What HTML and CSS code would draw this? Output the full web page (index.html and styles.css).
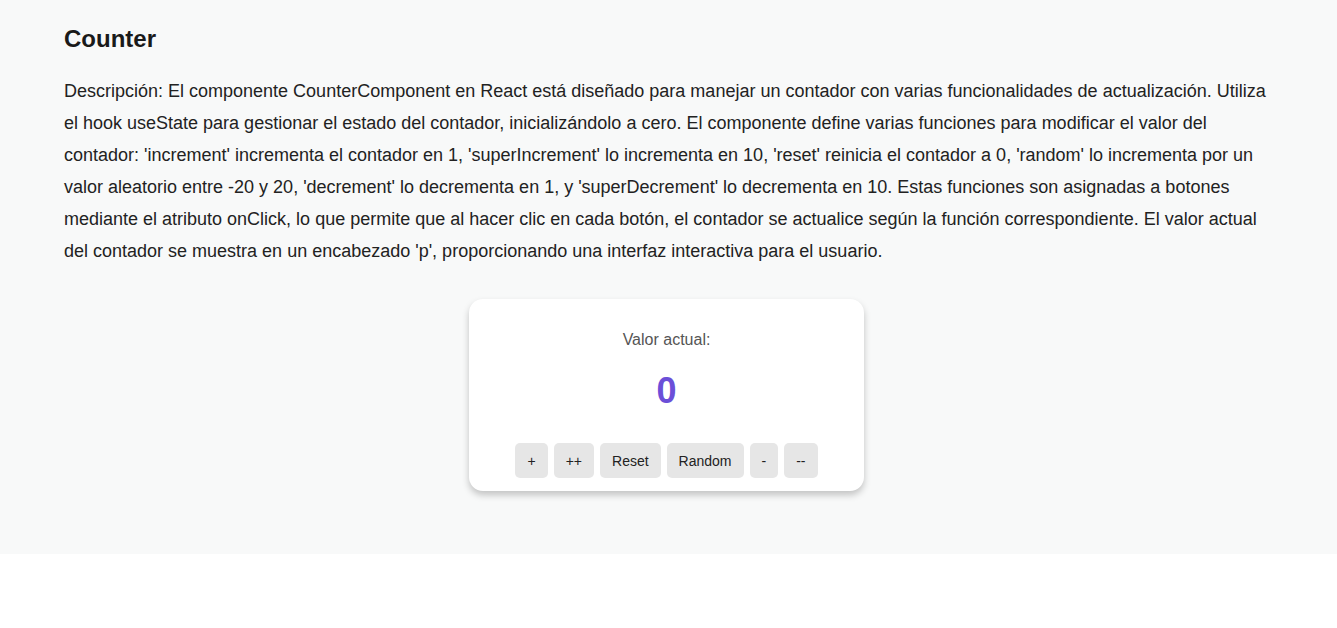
FILE: index.html
```html
<!DOCTYPE html>
<html lang="es">
<head>
<meta charset="utf-8">
<title>Counter</title>
<link rel="stylesheet" href="styles.css">
</head>
<body>
<section class="page">
  <h2 class="title">Counter</h2>
  <p class="desc">Descripción: El componente CounterComponent en React está diseñado para manejar un contador con varias funcionalidades de actualización. Utiliza el hook useState para gestionar el estado del contador, inicializándolo a cero. El componente define varias funciones para modificar el valor del contador: 'increment' incrementa el contador en 1, 'superIncrement' lo incrementa en 10, 'reset' reinicia el contador a 0, 'random' lo incrementa por un valor aleatorio entre -20 y 20, 'decrement' lo decrementa en 1, y 'superDecrement' lo decrementa en 10. Estas funciones son asignadas a botones mediante el atributo onClick, lo que permite que al hacer clic en cada botón, el contador se actualice según la función correspondiente. El valor actual del contador se muestra en un encabezado 'p', proporcionando una interfaz interactiva para el usuario.</p>
  <div class="card">
    <p class="label">Valor actual:</p>
    <p class="value">0</p>
    <div class="buttons">
      <button class="btn">+</button>
      <button class="btn">++</button>
      <button class="btn">Reset</button>
      <button class="btn">Random</button>
      <button class="btn">-</button>
      <button class="btn">--</button>
    </div>
  </div>
</section>
</body>
</html>
```
FILE: styles.css
```css
html, body {
  margin: 0;
  padding: 0;
  background: #ffffff;
  font-family: "Liberation Sans", Arial, sans-serif;
}
.page {
  background: #f8f9f9;
  padding: 25px 64px 64px;
  height: 554px;
  box-sizing: border-box;
}
.title {
  margin: 0;
  font-size: 24px;
  line-height: 28px;
  font-weight: 700;
  color: #1a1a1a;
}
.desc {
  margin: 22px 0 0;
  font-size: 18px;
  line-height: 32px;
  color: #222222;
}
.card {
  width: 395px;
  margin: 32px auto 0;
  background: #ffffff;
  border-radius: 14px;
  box-shadow: 0 4px 7px rgba(0, 0, 0, 0.22);
  padding: 31px 0 13px;
  box-sizing: border-box;
  display: flex;
  flex-direction: column;
  align-items: center;
  position: relative;
  left: -2px;
}
.label {
  margin: 0;
  font-size: 16px;
  line-height: 20px;
  color: #555555;
}
.value {
  margin: 20px 0 0;
  font-size: 36px;
  line-height: 42px;
  font-weight: 700;
  color: #6b4fd8;
}
.buttons {
  display: flex;
  gap: 6px;
  margin-top: 31px;
}
.btn {
  font-family: "Liberation Sans", Arial, sans-serif;
  font-size: 14px;
  color: #222222;
  background: #e6e6e6;
  border: none;
  border-radius: 5px;
  height: 35px;
  padding: 0 12px;
}
```
